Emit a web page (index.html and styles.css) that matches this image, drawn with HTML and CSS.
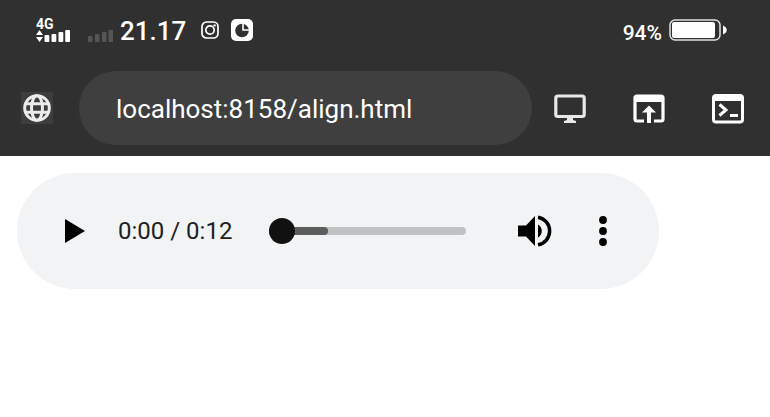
FILE: index.html
```html
<!DOCTYPE html>
<html lang="en">
<head>
<meta charset="utf-8">
<meta name="viewport" content="width=device-width, initial-scale=1">
<title>align.html</title>
<link rel="stylesheet" href="styles.css">
</head>
<body>
<header class="chrome">
  <div class="status">
    <div class="network">
      <span class="network-type">4G</span>
      <svg width="34" height="12" viewBox="0 0 34 12" fill="#fff" aria-hidden="true">
        <path d="M3.5 0 7 5H0zM3.5 12 0 7h7z"/>
        <rect x="8.500" y="5" width="4.800" height="7" rx="1"/><rect x="15.500" y="4" width="4.800" height="8" rx="1"/><rect x="22.500" y="2" width="4.800" height="10" rx="1"/><rect x="29.200" y="0" width="4.800" height="12" rx="1"/>
      </svg>
    </div>
    <svg class="no-signal" width="25" height="12" viewBox="0 0 25 12" fill="#555" aria-hidden="true">
      <rect x="0" y="6" width="4.500" height="6" rx="1"/><rect x="7" y="4" width="4.500" height="8" rx="1"/><rect x="14" y="2" width="4.500" height="10" rx="1"/><rect x="20.500" y="0" width="4.500" height="12" rx="1"/>
    </svg>
    <time class="clock">21.17</time>
    <svg class="notice" width="18" height="18" viewBox="0 0 18 18" fill="none" stroke="#fff" stroke-width="1.700" aria-hidden="true">
      <rect x="1" y="1" width="16" height="16" rx="4.500"/><circle cx="9" cy="9" r="4.200"/><circle cx="13.600" cy="4.400" r="1.200" fill="#fff" stroke="none"/>
    </svg>
    <svg width="22" height="22" viewBox="0 0 22 22" aria-hidden="true">
      <rect width="22" height="22" rx="5" fill="#fff"/><circle cx="11" cy="11.500" r="6.800" fill="#303030"/>
      <path d="M12 4v7h7" fill="none" stroke="#fff" stroke-width="1.600"/>
    </svg>
    <div class="battery">
      <span class="charge">94%</span>
      <svg width="58" height="22" viewBox="0 0 58 22" aria-hidden="true">
        <rect x="1" y="1" width="50" height="20" rx="5" fill="none" stroke="#e0e0e0" stroke-width="1.500"/>
        <rect x="3" y="3" width="43" height="16" rx="2" fill="#fff"/><path d="M54 6.500c5 2 5 7 0 9z" fill="#fff"/>
      </svg>
    </div>
  </div>
  <form class="toolbar">
    <button class="site" type="button" aria-label="Site information">
      <svg width="28" height="28" viewBox="0 0 28 28" fill="none" stroke="#ececec" stroke-width="3" aria-hidden="true">
        <circle cx="14" cy="14" r="12.300"/><ellipse cx="14" cy="14" rx="5.500" ry="12.300"/><path d="M2.500 9.700h23M2.500 18.300h23"/>
      </svg>
    </button>
    <input class="address" type="text" aria-label="Address" value="localhost:8158/align.html">
    <div class="tools">
      <button type="button" aria-label="Desktop view">
        <svg width="32" height="30" viewBox="0 0 32 30" aria-hidden="true">
          <rect x="1.800" y="2" width="28.400" height="20.500" rx="2" fill="none" stroke="#e8e8e8" stroke-width="3.200"/><path d="M13 23h6v3l3 1v2H10v-2l3-1z" fill="#e8e8e8"/>
        </svg>
      </button>
      <button type="button" aria-label="Open in browser">
        <svg width="32" height="30" viewBox="0 0 32 30" aria-hidden="true">
          <path d="M11 27H4a2 2 0 0 1-2-2V4a2 2 0 0 1 2-2h24a2 2 0 0 1 2 2v21a2 2 0 0 1-2 2h-7" fill="none" stroke="#fff" stroke-width="3.200"/>
          <path d="M2 2h28v6H2z" fill="#fff"/><path d="M16 11.500 23 18.500h-5V29h-4V18.500H9z" fill="#fff"/>
        </svg>
      </button>
      <button type="button" aria-label="Console">
        <svg width="32" height="30" viewBox="0 0 32 30" fill="none" stroke="#fff" aria-hidden="true">
          <rect x="1.500" y="1.500" width="29" height="26.500" rx="2.500" stroke-width="3"/><path d="M2 2h28v5H2z" fill="#fff" stroke="none"/>
          <path d="m7.500 10.500 6.500 5.500-6.500 5.500M18 21.500h8" stroke-width="3"/>
        </svg>
      </button>
    </div>
  </form>
</header>
<main class="page">
  <section class="player" aria-label="Audio player">
    <button class="play" type="button" aria-label="Play">
      <svg width="20" height="24" viewBox="0 0 20 24" aria-hidden="true"><path d="M0 0v24l20-12z"/></svg>
    </button>
    <span class="elapsed">0:00 / 0:12</span>
    <div class="timeline">
      <span class="rail"><span class="buffered"></span></span>
      <input class="seek" type="range" min="0" max="12" value="0" aria-label="Seek">
    </div>
    <button class="volume" type="button" aria-label="Mute">
      <svg width="34" height="32" viewBox="0 0 34 32" aria-hidden="true">
        <path d="M0 10.500h8L17 1v30l-9-9.500H0z"/><path d="M20 9.500a7.500 7.500 0 0 1 0 13z"/>
        <path d="M20 2.200a14 14 0 0 1 0 27.600" fill="none" stroke="#000" stroke-width="3.500"/>
      </svg>
    </button>
    <button class="more" type="button" aria-label="More options">
      <svg width="8" height="30" viewBox="0 0 8 30" aria-hidden="true"><circle cx="4" cy="4" r="3.900"/><circle cx="4" cy="15" r="3.900"/><circle cx="4" cy="26" r="3.900"/></svg>
    </button>
  </section>
</main>
</body>
</html>
```
FILE: styles.css
```css
* { box-sizing: border-box; }

body {
  margin: 0;
  background: #fff;
  font-family: Roboto, "Liberation Sans", sans-serif;
}

svg { display: block; flex: none; }

button {
  display: flex;
  flex: none;
  padding: 0;
  border: 0;
  background: none;
}

.chrome {
  padding-bottom: 11px;
  background: #303030;
  color: #fff;
}

.status {
  display: flex;
  align-items: center;
  height: 60px;
  padding: 0 43px 0 36px;
}

.network-type {
  display: block;
  font-size: 14px;
  font-weight: 700;
  line-height: 12px;
}

.no-signal { margin: 12px 7px 0 18px; }

.clock {
  padding-top: 2px;
  font-size: 26px;
  font-weight: 500;
  line-height: 32px;
}

.notice { margin: 0 12px 0 15px; }

.battery {
  display: flex;
  align-items: center;
  gap: 7px;
  margin-left: auto;
  font-size: 21px;
  font-weight: 500;
  line-height: 24px;
}

.charge { padding-top: 5px; }

.toolbar {
  display: flex;
  align-items: center;
  margin-top: 11px;
  padding: 0 26px 0 21px;
}

.site {
  padding: 2px;
  background: #3d3d3d;
}

.address {
  flex: 1;
  min-width: 0;
  height: 74px;
  margin: 0 22px 0 26px;
  padding: 2px 37px 0;
  border: 0;
  border-radius: 37px;
  background: #3f3f3f;
  color: #fff;
  font: 400 26px/32px Roboto, "Liberation Sans", sans-serif;
}

.tools {
  display: flex;
  gap: 47px;
  padding-top: 1px;
}

.page { padding: 17px; }

.player {
  display: flex;
  align-items: center;
  width: 100%;
  max-width: 642px;
  height: 116px;
  padding: 0 52px 0 48px;
  border-radius: 58px;
  background: #f1f3f4;
}

.elapsed {
  margin: 0 37px 0 33px;
  color: #202124;
  font-size: 24px;
  line-height: 28px;
  white-space: nowrap;
}

.timeline {
  display: grid;
  flex: 1;
  align-items: center;
  min-width: 60px;
}

.rail, .seek { grid-area: 1 / 1; }

.rail {
  height: 8px;
  border-radius: 4px;
  background: #c1c2c3;
}

.buffered {
  display: block;
  width: 30%;
  height: 100%;
  border-radius: 4px;
  background: #5c5d5d;
}

.seek {
  width: 100%;
  height: 26px;
  margin: 0;
  appearance: none;
  background: transparent;
}

.seek::-webkit-slider-thumb {
  width: 26px;
  height: 26px;
  appearance: none;
  border-radius: 50%;
  background: #111;
}

.volume { margin: 0 47px 0 52px; }
```
